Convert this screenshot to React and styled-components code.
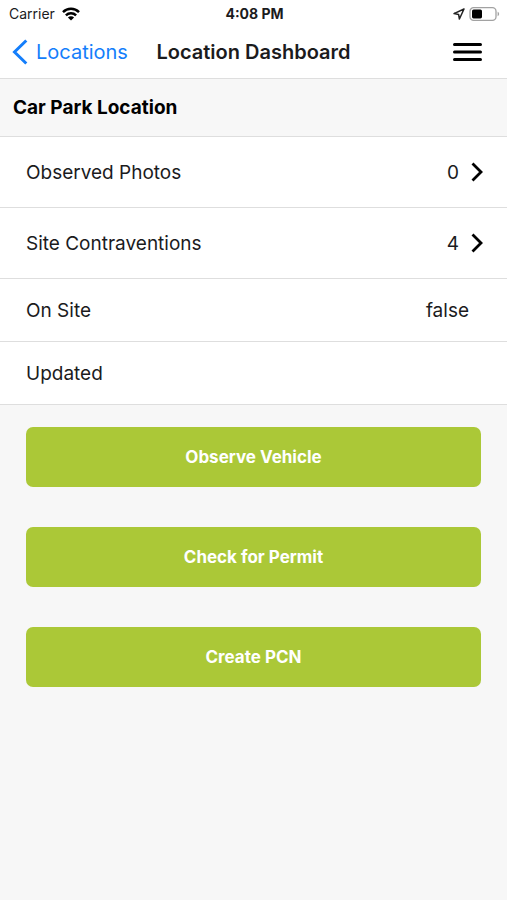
import React from "react"
import styled, { createGlobalStyle } from "styled-components"

const GlobalStyle = createGlobalStyle`
  * {
    box-sizing: border-box;
  }
  body {
    margin: 0;
    background-color: #f7f7f7;
    color: #1b1b1d;
    font-family: Inter, "Liberation Sans", sans-serif;
  }
`

const StatusBar = styled.div`
  display: grid;
  grid-template-columns: 1fr auto 1fr;
  align-items: center;
  height: 27px;
  padding: 0 7px 0 9px;
  background-color: white;
  font-size: 14px;
`

const Carrier = styled.span`
  display: flex;
  align-items: center;
  gap: 7px;
`

const Clock = styled.time`
  font-weight: 700;
`

const Indicators = styled.span`
  display: flex;
  align-items: center;
  justify-content: flex-end;
  gap: 4px;
`

const NavBar = styled.nav`
  display: grid;
  grid-template-columns: 1fr auto 1fr;
  align-items: center;
  height: 52px;
  padding: 0 12px 2px;
  background-color: white;
  border-bottom: 1px solid #dedede;
`

const BackLink = styled.a`
  display: flex;
  align-items: center;
  gap: 8px;
  color: #147efb;
  font-size: 20px;
  text-decoration: none;
`

const Title = styled.h1`
  margin: 0;
  font-size: 20px;
  font-weight: 600;
`

const MenuButton = styled.button`
  display: flex;
  justify-self: end;
  padding: 0 13px;
  border: none;
  background: none;
  color: black;
`

const SectionHeader = styled.h2`
  display: flex;
  align-items: center;
  height: 58px;
  margin: 0;
  padding: 0 13px;
  border-bottom: 1px solid #dedede;
  color: black;
  font-size: 19px;
  font-weight: 700;
`

const List = styled.ul`
  list-style: none;
  margin: 0;
  padding: 0;
`

const Row = styled.li`
  background-color: white;
  border-bottom: 1px solid #dedede;
  font-size: 19px;
`

const RowContent = styled.div`
  display: flex;
  align-items: center;
  justify-content: space-between;
  height: ${props => (props.$tall ? "70px" : "62px")};
  padding: 0 ${props => (props.$tall ? "24px" : "38px")} 0 26px;
  color: inherit;
  text-decoration: none;
`

const Value = styled.span`
  display: flex;
  align-items: center;
  gap: 12px;
`

const Actions = styled.div`
  display: flex;
  flex-direction: column;
  gap: 40px;
  padding: 22px 26px;
`

const ActionButton = styled.button`
  height: 60px;
  border: none;
  border-radius: 7px;
  background-color: #abc837;
  color: white;
  font-family: inherit;
  font-size: 17px;
  font-weight: 700;
`

const WifiIcon = () => (
  <svg width="18" height="14" viewBox="0 0 18 14" aria-hidden="true">
    <g fill="none" stroke="black" strokeWidth="2.5">
      <path d="M1 5.1a11.4 11.4 0 0 1 16 0" />
      <path d="M3.9 8.3a7.3 7.3 0 0 1 10.2 0" />
    </g>
    <path d="M9 13.6 5.9 10.5a4.4 4.4 0 0 1 6.2 0z" fill="black" />
  </svg>
)

const LocationIcon = () => (
  <svg width="12" height="12" viewBox="0 0 12 12" aria-hidden="true">
    <path
      d="M11 1 1 5.6l4.6.8.8 4.6z"
      fill="none"
      stroke="#222"
      strokeWidth="1.5"
      strokeLinejoin="round"
    />
  </svg>
)

const BatteryIcon = () => (
  <svg width="31" height="14" viewBox="0 0 31 14" aria-hidden="true">
    <rect x="1" y="0.7" width="26" height="12.6" rx="3.6" fill="none" stroke="#a2a2a2" strokeWidth="1.3" />
    <rect x="3" y="2.6" width="10" height="8.8" rx="1.6" fill="black" />
    <path d="M28.6 4.8c2 .7 2 3.7 0 4.4z" fill="#a2a2a2" />
  </svg>
)

const BackIcon = () => (
  <svg width="16" height="26" viewBox="0 0 16 26" aria-hidden="true">
    <path d="M14.3 1.5 2.5 13l11.8 11.5" fill="none" stroke="currentColor" strokeWidth="3" />
  </svg>
)

const MenuIcon = () => (
  <svg width="29" height="20" viewBox="0 0 29 20" aria-hidden="true">
    <path d="M1.5 2.5h26M1.5 10h26M1.5 17.5h26" stroke="currentColor" strokeWidth="3" strokeLinecap="round" />
  </svg>
)

const ChevronIcon = () => (
  <svg width="12" height="20" viewBox="0 0 12 20" aria-hidden="true">
    <path d="M1.5 1.5 10 10l-8.5 8.5" fill="none" stroke="black" strokeWidth="2.8" />
  </svg>
)

const rows = [
  { label: "Observed Photos", value: "0", href: "#photos" },
  { label: "Site Contraventions", value: "4", href: "#contraventions" },
  { label: "On Site", value: "false" },
  { label: "Updated", value: "" },
]

const actions = ["Observe Vehicle", "Check for Permit", "Create PCN"]

export default () => (
  <>
    <GlobalStyle />
    <StatusBar>
      <Carrier>Carrier <WifiIcon /></Carrier>
      <Clock>4:08 PM</Clock>
      <Indicators>
        <LocationIcon />
        <BatteryIcon />
      </Indicators>
    </StatusBar>
    <NavBar>
      <BackLink href="#locations"><BackIcon />Locations</BackLink>
      <Title>Location Dashboard</Title>
      <MenuButton aria-label="Menu"><MenuIcon /></MenuButton>
    </NavBar>
    <main>
      <SectionHeader>Car Park Location</SectionHeader>
      <List>
        {rows.map(({ label, value, href }) => (
          <Row key={label}>
            <RowContent as={href ? "a" : "div"} href={href} $tall={Boolean(href)}>
              <span>{label}</span>
              <Value>{value}{href && <ChevronIcon />}</Value>
            </RowContent>
          </Row>
        ))}
      </List>
      <Actions>
        {actions.map(action => (
          <ActionButton key={action} type="button">{action}</ActionButton>
        ))}
      </Actions>
    </main>
  </>
)
